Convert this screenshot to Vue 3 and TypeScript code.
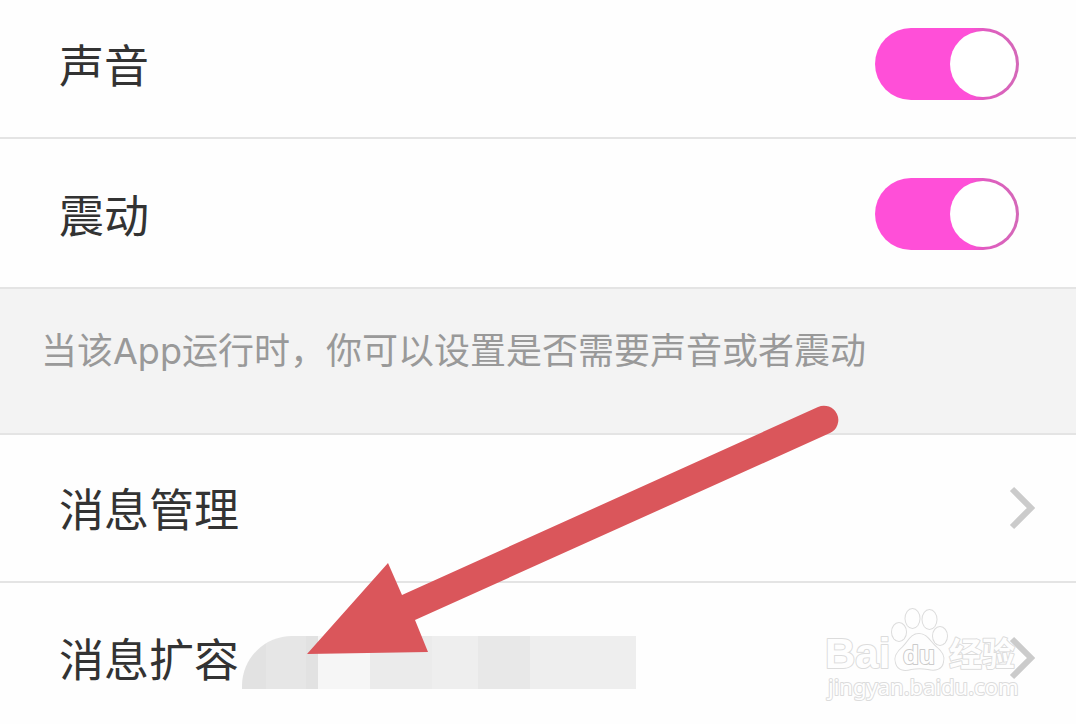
<script setup lang="ts">
import { reactive } from 'vue'

interface Toggle {
  id: string
  label: string
  on: boolean
}

const toggles = reactive<Toggle[]>([
  { id: 'sound', label: '声音', on: true },
  { id: 'vibrate', label: '震动', on: true },
])

const links: { label: string; masked: boolean }[] = [
  { label: '消息管理', masked: false },
  { label: '消息扩容', masked: true },
]
</script>

<template>
  <main class="page">
    <section>
      <div v-for="item in toggles" :key="item.id" class="row toggle-row">
        <label class="label" :for="item.id">{{ item.label }}</label>
        <input :id="item.id" v-model="item.on" class="switch" type="checkbox" role="switch" />
      </div>
    </section>

    <p class="hint">当该App运行时，你可以设置是否需要声音或者震动</p>

    <nav>
      <button v-for="link in links" :key="link.label" type="button" class="row link-row">
        <span class="label">{{ link.label }}</span>
        <span v-if="link.masked" class="mask"></span>
        <svg class="chevron" width="26" height="44" viewBox="0 0 26 44" aria-hidden="true">
          <path d="M3 3 L22 22 L3 41" fill="none" stroke="#cbcbcb" stroke-width="6" />
        </svg>
      </button>
    </nav>

    <svg class="arrow" width="540" height="260" viewBox="302 400 540 260" aria-hidden="true">
      <path
        d="M307 654 L388 563 L402 595 L818 407 A14 14 0 0 1 830 433 L415 620 L428 652 Z"
        fill="#da565b"
      />
    </svg>

    <svg class="watermark" width="204" height="100" viewBox="820 604 204 100" role="img" aria-label="Baidu经验 jingyan.baidu.com">
      <g fill="#ffffff" stroke="#d9d9d9" stroke-width="2" stroke-linejoin="round" paint-order="stroke">
        <text class="latin" x="825" y="668" font-size="42" font-weight="700">Bai</text>
        <ellipse cx="899" cy="632" rx="7" ry="9" />
        <ellipse cx="912.500" cy="618.500" rx="7" ry="9.500" />
        <ellipse cx="929.500" cy="619.500" rx="7" ry="9.500" />
        <ellipse cx="940" cy="636" rx="7" ry="9" />
        <path d="M919 634 C911 634 909 641 903 647 C897 652 894 657 896 663 C898 670 904 671 911 669 C917 668 922 668 928 669 C935 671 942 669 943 662 C945 656 941 651 936 647 C930 642 927 634 919 634 Z" />
        <text class="latin" x="903" y="664" font-size="26" font-weight="700" stroke="#c6c6c6">du</text>
        <text class="cjk" x="949" y="666" font-size="33" font-weight="700">经验</text>
        <text class="url" x="828" y="695" font-size="22">jingyan.baidu.com</text>
      </g>
    </svg>
  </main>
</template>

<style scoped>
.page {
  position: relative;
  color: #333;
  background: #fefefe;
  font-family: "Noto Sans CJK SC", "Noto Sans", sans-serif;
}

.row {
  display: flex;
  align-items: center;
  box-sizing: border-box;
  width: 100%;
  border: 0;
  border-bottom: 2px solid #e4e4e4;
  color: inherit;
  background: none;
  font: inherit;
  text-align: left;
}

.toggle-row {
  justify-content: space-between;
  padding: 39px 57px 37px 59px;
}

.toggle-row:first-child {
  padding-top: 28px;
}

.label {
  font-size: 45px;
  line-height: 54px;
}

.switch {
  appearance: none;
  display: flex;
  box-sizing: border-box;
  width: 144px;
  height: 72px;
  margin: 0;
  padding: 3px;
  border-radius: 36px;
  background: linear-gradient(90deg, #ff4fd8 66%, #e05cc0 76%, #d468b8);
}

.switch::before {
  content: "";
  width: 66px;
  height: 66px;
  border-radius: 50%;
  background: #fff;
}

.switch:checked::before {
  margin-left: auto;
}

.switch:not(:checked) {
  background: #ddd;
}

.hint {
  margin: 0;
  padding: 40px 41px 60px;
  border-bottom: 2px solid #e4e4e4;
  color: #999;
  background: #f3f3f3;
  font-family: Inter, "Noto Sans CJK SC", sans-serif;
  font-size: 36px;
  line-height: 44px;
}

.link-row {
  padding: 46px 41px 46px 59px;
}

.link-row:last-child {
  padding-top: 48px;
  padding-bottom: 40px;
  border-bottom: 0;
}

.mask {
  width: 394px;
  height: 53px;
  margin: 4px 0 -4px 3px;
  border-radius: 50px 0 0 0;
  background: linear-gradient(
    90deg,
    #e2e2e2 0 24px,
    #e6e6e6 24px 64px,
    #e2e2e2 64px 76px,
    #f6f6f6 76px 128px,
    #ebebeb 128px 190px,
    #eeeeee 190px 236px,
    #e8e8e8 236px 288px,
    #eeeeee 288px
  );
}

.chevron {
  flex: none;
  margin-left: auto;
}

.arrow {
  position: absolute;
  left: 302px;
  top: 400px;
  pointer-events: none;
}

.watermark {
  position: absolute;
  right: 52px;
  top: 604px;
  opacity: 0.9;
  pointer-events: none;
}

.latin {
  font-family: "Liberation Sans", Arial, sans-serif;
}

.url {
  font-family: "Noto Sans", sans-serif;
}

.cjk {
  font-family: "Noto Sans CJK SC", sans-serif;
}
</style>

<style>
body {
  margin: 0;
  background: #fefefe;
}
</style>
